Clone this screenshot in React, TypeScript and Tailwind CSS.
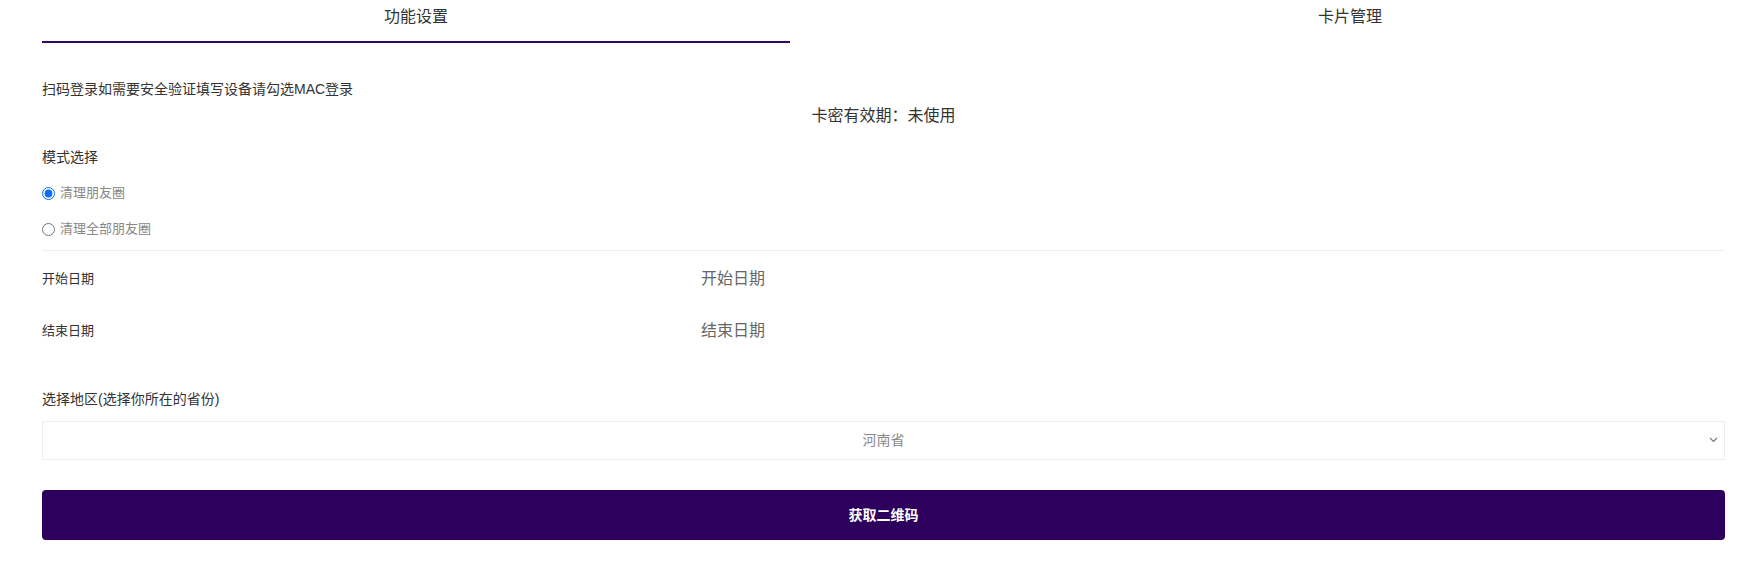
export default function App() {
  const f = { fontFamily: '"Liberation Sans", "Noto Sans CJK SC", sans-serif' };
  return (
    <div style={f} className="w-[1750px] overflow-hidden bg-white text-[#333]">
      <div className="mx-[42px] w-[1683px]">
        <div className="flex">
          <div className="w-[748px] shrink-0 border-b-2 border-[#2c0a5e] pt-[5px] pb-[12px] text-center text-[16px] text-[#333]">功能设置</div>
          <div className="w-[1120px] shrink-0 pt-[5px] pb-[12px] text-center text-[16px] text-[#333]">卡片管理</div>
        </div>
        <p className="mt-[36px] text-[14px] leading-[20px] text-[#333]">扫码登录如需要安全验证填写设备请勾选MAC登录</p>
        <p className="mt-[6px] text-center text-[16px] leading-[22px] text-[#333]">卡密有效期：未使用</p>
        <p className="mt-[20px] text-[14px] leading-[20px] text-[#333]">模式选择</p>
        <label className="mt-[16px] flex items-center gap-[5px] text-[13px] leading-[20px] text-[#888]">
          <input type="radio" name="m" defaultChecked className="m-0 h-[13px] w-[13px] accent-[#0b6ef5]" />清理朋友圈
        </label>
        <label className="mt-[16px] flex items-center gap-[5px] text-[13px] leading-[20px] text-[#888]">
          <input type="radio" name="m" className="m-0 h-[13px] w-[13px]" />清理全部朋友圈
        </label>
        <div className="mt-[11px] border-t border-[#eee]" />
        <div className="mt-[16px] flex items-center">
          <span className="w-[659px] text-[13px] text-[#333]">开始日期</span>
          <span className="text-[16px] text-[#666]">开始日期</span>
        </div>
        <div className="mt-[28px] flex items-center">
          <span className="w-[659px] text-[13px] text-[#333]">结束日期</span>
          <span className="text-[16px] text-[#666]">结束日期</span>
        </div>
        <p className="mt-[46px] text-[14px] leading-[20px] text-[#333]">选择地区(选择你所在的省份)</p>
        <div className="relative mt-[12px] flex h-[39px] items-center justify-center border border-[#eee] text-[14px] text-[#888]">
          河南省
          <svg className="absolute right-[6px] top-[15px]" width="9" height="6" viewBox="0 0 9 6"><path d="M1 1l3.5 3.5L8 1" fill="none" stroke="#777" strokeWidth="1.2" /></svg>
        </div>
        <button className="mt-[30px] flex h-[50px] w-full items-center justify-center rounded-[4px] bg-[#2c005c] text-[14px] font-bold text-white">获取二维码</button>
      </div>
    </div>
  );
}
